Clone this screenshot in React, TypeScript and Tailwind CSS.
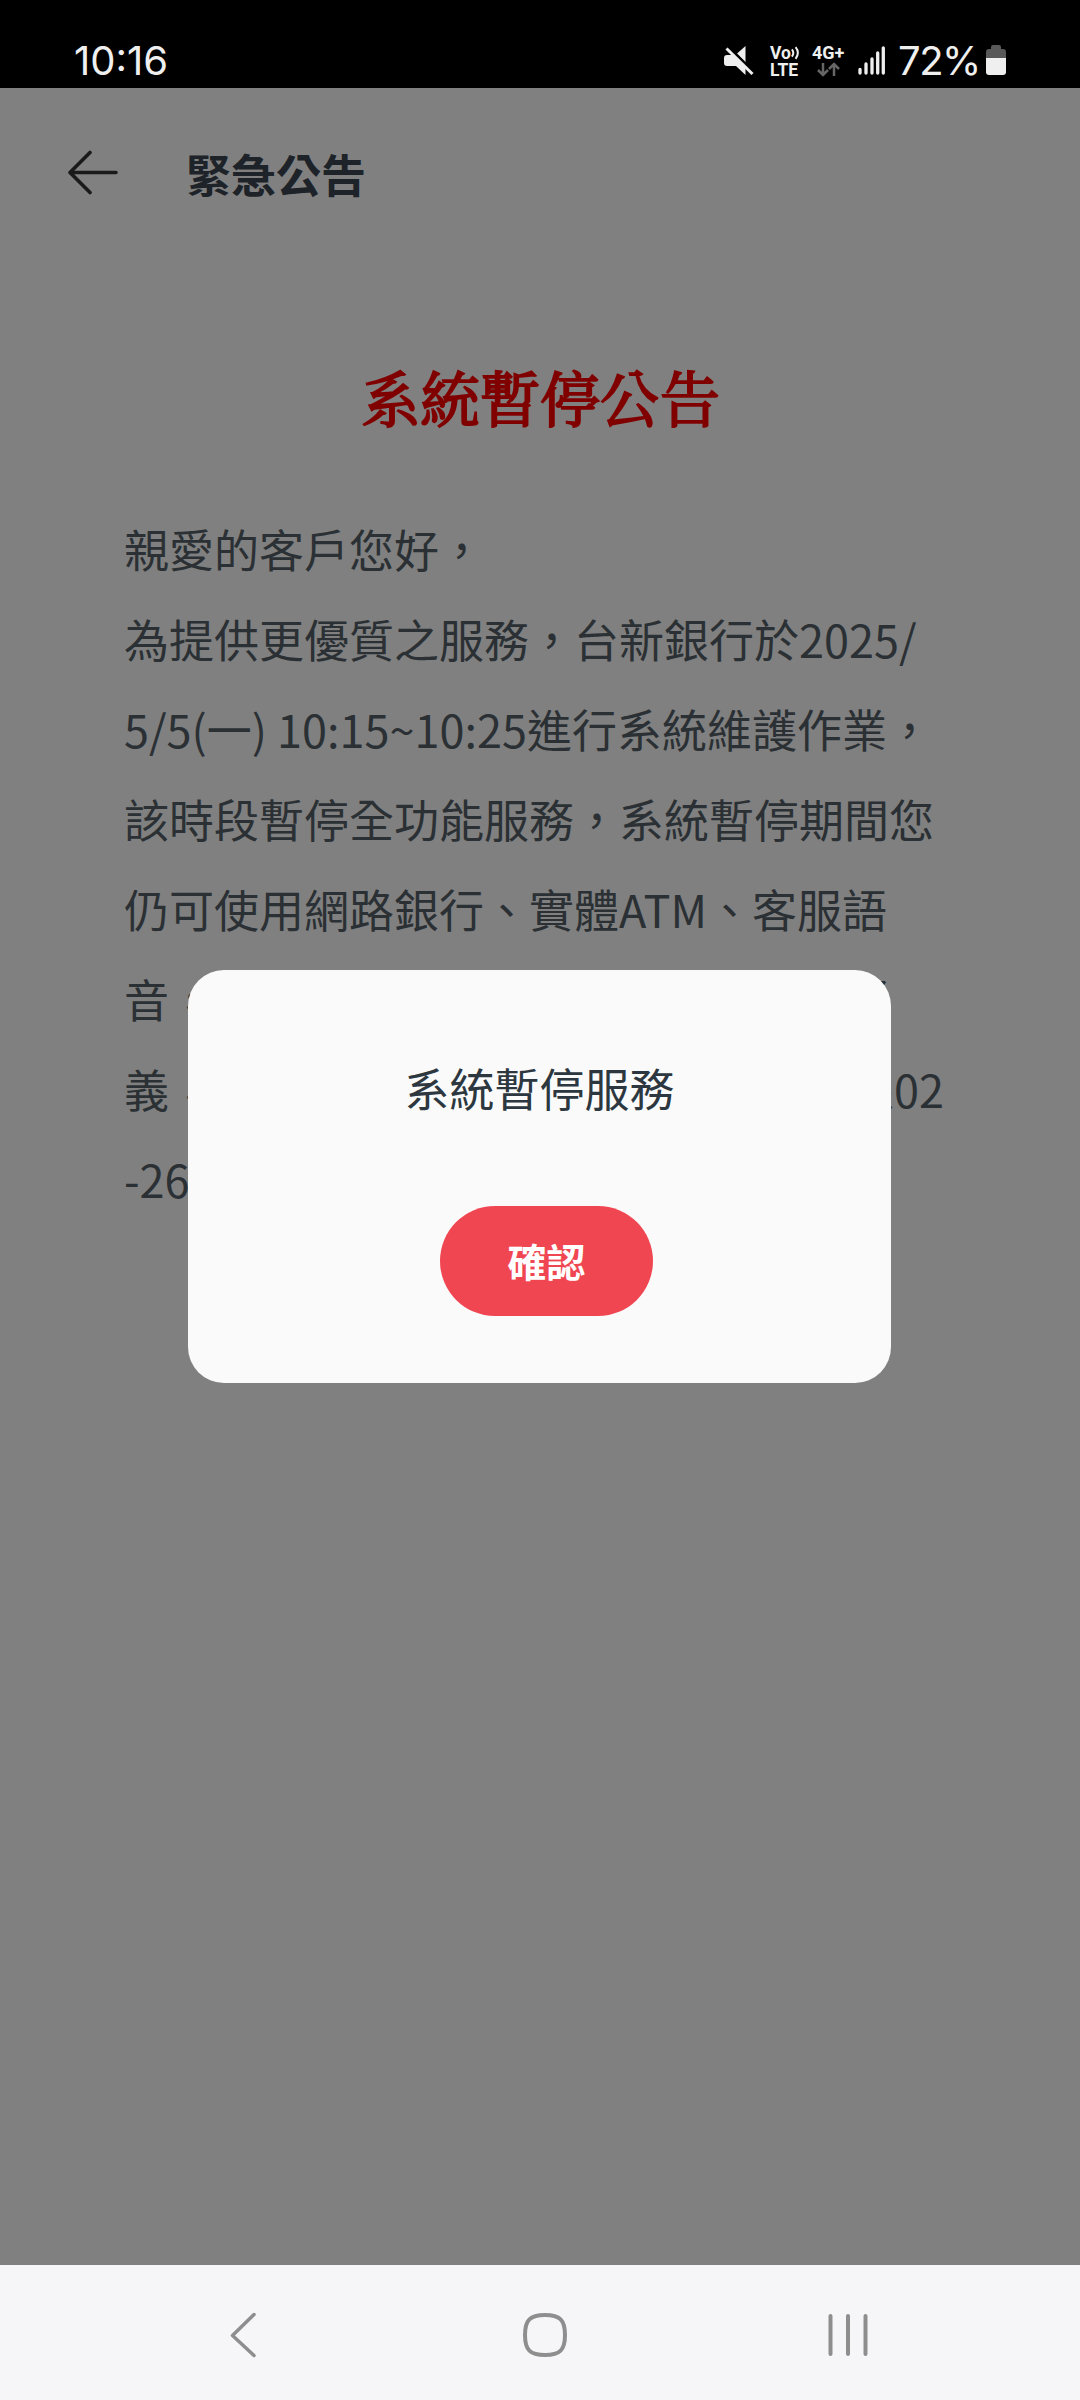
const sans = "font-['Noto_Sans_CJK_TC',sans-serif]";

function StatusBar() {
  return (
    <header className="flex h-[88px] shrink-0 items-start justify-between bg-black pr-[73px] pl-[74px] text-[#efefef]">
      <span className="pt-[37px] font-['Inter',sans-serif] text-[40px] leading-[48px]">10:16</span>
      <div className="flex items-start">
        <svg className="mt-[45px] mr-[15px] h-[31px] w-[32px]" viewBox="0 0 32 31">
          <path fill="#efefef" d="M13.500 9L22.500 1v17z" />
          <path d="M4.500 1l26 26" stroke="#000" strokeWidth="3" />
          <path fill="#efefef" d="M1 13q0-3 3-3h7l11.500 11.500V30L13 21H4q-3 0-3-3z" />
          <path d="M3.500 3.500l26 25.500" stroke="#efefef" strokeWidth="3" />
        </svg>
        <div className="mt-[45px] mr-[11px] w-[31px] font-['Roboto',sans-serif] text-[17.500px] leading-[16.500px] font-bold">
          <div className="flex items-center">
            <span>Vo</span>
            <svg className="h-[16px] w-[11px]" viewBox="0 0 11 16" fill="none" stroke="#efefef" strokeWidth="2.200">
              <path d="M1 4q3 4 0 8M5 1.500q5 6 0 13" />
            </svg>
          </div>
          <div>LTE</div>
        </div>
        <div className="mt-[45px] mr-[11px] w-[35px] font-['Roboto',sans-serif] text-[18px] leading-[16.500px] font-bold">
          <div>4G+</div>
          <svg className="ml-[4px] h-[16px] w-[25px]" viewBox="0 0 25 16" fill="none" stroke="#666" strokeWidth="2.500">
            <path d="M7 1v12M2 8l5 5 5-5M18 14V2M13 7l5-5 5 5" />
          </svg>
        </div>
        <svg className="mt-[45px] h-[30px] w-[27px]" viewBox="0 0 27 30" stroke="#efefef" strokeWidth="3.300" strokeLinecap="round">
          <path d="M2 24.500v3.500M8 19v9M14 14v14M19.700 8v20M25.300 3v25" />
        </svg>
        <span className="mt-[37px] ml-[13px] w-[82px] font-['Inter',sans-serif] text-[40px] leading-[48px] tracking-[-1.500px]">72%</span>
        <svg className="mt-[44px] ml-[5px] h-[32px] w-[22px]" viewBox="0 0 22 32">
          <path fill="#595959" d="M1 14V8q0-3 3-3h2V3q0-2 2-2h6q2 0 2 2v2h2q3 0 3 3v6z" />
          <path fill="#efefef" d="M1 14h20v14q0 3-3 3H4q-3 0-3-3z" />
        </svg>
      </div>
    </header>
  );
}

function NavBar() {
  return (
    <nav className="flex h-[135px] shrink-0 items-center justify-between bg-[#f6f6f8] pr-[212px] pl-[229px]">
      <svg className="mt-[4px] h-[46px] w-[28px]" viewBox="0 0 28 46" fill="none" stroke="#8e8e8e" strokeWidth="3.500" strokeLinecap="round" strokeLinejoin="round">
        <path d="M25 2.500L3.500 23.500 25 43.500" />
      </svg>
      <svg className="mt-[4px] ml-[4px] h-[46px] w-[46px]" viewBox="0 0 46 46" fill="none" stroke="#8e8e8e" strokeWidth="4">
        <path d="M23 3C38 3 43 8 43 23S38 43 23 43 3 38 3 23 8 3 23 3z" />
      </svg>
      <svg className="mt-[4px] h-[46px] w-[40px]" viewBox="0 0 40 46" stroke="#8e8e8e" strokeWidth="4" strokeLinecap="round">
        <path d="M2.500 4v38M20 4v38M37.500 4v38" />
      </svg>
    </nav>
  );
}

export default function App() {
  return (
    <div className={`flex h-[2400px] w-[1080px] flex-col overflow-hidden bg-[#808080] ${sans}`}>
      <StatusBar />
      <main className="relative flex-1 text-[#2b3034]">
        <div className="flex h-[170px] items-center pl-[68px]">
          <svg className="h-[46px] w-[52px]" viewBox="0 0 52 46" fill="none" stroke="#1a1a1a" strokeWidth="3.600" strokeLinecap="round" strokeLinejoin="round">
            <path d="M22 2.500L2 22.500 22 42.500M2 22.500h46" />
          </svg>
          <h1 className="mt-[2px] ml-[66px] text-[45px] leading-[60px] font-bold text-[#1d2328]">緊急公告</h1>
        </div>
        <h2 className="mt-[93px] text-center font-['Noto_Serif_CJK_TC','Noto_Sans_CJK_TC',serif] text-[60px] leading-[90px] font-normal text-[#800000] [-webkit-text-stroke:2px_#800000]">系統暫停公告</h2>
        <p className="mt-[63px] pl-[124px] text-[45px] leading-[90px] whitespace-nowrap">
          親愛的客戶您好，<br />
          為提供更優質之服務，台新銀行於2025/<br />
          5/5(一) 10:15~10:25進行系統維護作業，<br />
          該時段暫停全功能服務，系統暫停期間您<br />
          仍可使用網路銀行、實體ATM、客服語<br />
          音，不便之處敬請見諒。如您有任何疑<br />
          義，請撥本行24小時電話客戶服務專線02<br />
          -26
        </p>
        <section className="absolute top-[882px] left-[188px] flex h-[413px] w-[703px] flex-col items-center rounded-[36px] bg-[#fafafa] pt-[85px]">
          <p className="text-[45px] leading-[66px] text-[#2d3740]">系統暫停服務</p>
          <button className="mt-[85px] ml-[14px] flex h-[110px] w-[213px] items-center justify-center rounded-full bg-[#f04652] pb-[2px] text-[39px] font-bold text-white">確認</button>
        </section>
      </main>
      <NavBar />
    </div>
  );
}
